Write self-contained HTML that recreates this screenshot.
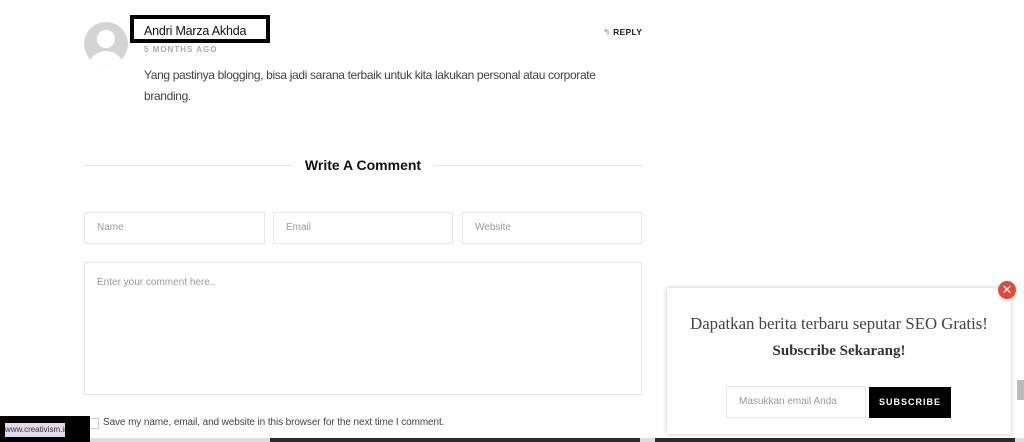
<!DOCTYPE html>
<html><head><style>
body{margin:0;width:1024px;height:442px;overflow:hidden;background:#fff;position:relative;font-family:"Liberation Sans",sans-serif;}
.a{position:absolute;}
.inp{position:absolute;border:1px solid #e6e6e6;box-sizing:border-box;color:#999;font-size:10px;padding-left:12px;}
</style></head><body>
<div class="a" style="left:84px;top:22px;width:44px;height:44px;border-radius:50%;background:#d4d4d4;overflow:hidden">
 <div class="a" style="left:13px;top:8px;width:18px;height:18px;border-radius:50%;background:#fff"></div>
 <div class="a" style="left:5px;top:29px;width:34px;height:30px;border-radius:50%;background:#fff"></div>
</div>
<div class="a" style="left:130px;top:15px;width:140px;height:28px;border:4px solid #000;box-sizing:border-box"></div>
<div class="a" style="left:144px;top:24px;font-size:12.5px;color:#111;letter-spacing:-0.2px">Andri Marza Akhda</div>
<div class="a" style="left:144px;top:45px;font-size:8px;color:#aaa;letter-spacing:1px;font-weight:bold">5 MONTHS AGO</div>
<div class="a" style="left:603px;top:27px;font-size:8.5px;color:#222;font-weight:bold;letter-spacing:.3px"><span style="color:#aaa">↰</span> REPLY</div>
<div class="a" style="left:144px;top:65px;font-size:12px;color:#444;line-height:21px;width:490px;letter-spacing:-0.35px">Yang pastinya blogging, bisa jadi sarana terbaik untuk kita lakukan personal atau corporate branding.</div>
<div class="a" style="left:84px;top:165px;width:208px;height:1px;background:#e5e5e5"></div>
<div class="a" style="left:434px;top:165px;width:208px;height:1px;background:#e5e5e5"></div>
<div class="a" style="left:292px;top:157px;width:142px;text-align:center;font-size:14px;font-weight:bold;color:#111">Write A Comment</div>
<div class="inp" style="left:84px;top:212px;width:181px;height:32px;line-height:30px">Name</div>
<div class="inp" style="left:273px;top:212px;width:180px;height:32px;line-height:30px">Email</div>
<div class="inp" style="left:462px;top:212px;width:180px;height:32px;line-height:30px">Website</div>
<div class="inp" style="left:84px;top:262px;width:558px;height:133px;padding-top:14px">Enter your comment here..</div>
<div class="a" style="left:88px;top:418px;width:9px;height:9px;border:1px solid #ccc"></div>
<div class="a" style="left:103px;top:417px;font-size:10px;color:#444;letter-spacing:-0.1px">Save my name, email, and website in this browser for the next time I comment.</div>
<div class="a" style="left:0;top:416px;width:90px;height:26px;background:#000"></div>
<div class="a" style="left:5px;top:423px;width:60px;height:14px;background:#e6d9ef;font-size:8px;line-height:14px;color:#333;white-space:nowrap;overflow:hidden">www.creativism.id</div>
<div class="a" style="left:90px;top:438px;width:934px;height:4px;background:#ddd"></div>
<div class="a" style="left:270px;top:438px;width:370px;height:4px;background:#2a2a2a"></div>
<div class="a" style="left:655px;top:438px;width:360px;height:4px;background:#2a2a2a"></div>
<div class="a" style="left:667px;top:288px;width:344px;height:146px;background:#fff;box-shadow:0 0 4px rgba(0,0,0,.25)"></div>
<div class="a" style="left:667px;top:314px;width:344px;text-align:center;font-family:'Liberation Serif',serif;font-size:16.8px;color:#444;white-space:nowrap">Dapatkan berita terbaru seputar SEO Gratis!</div>
<div class="a" style="left:667px;top:343px;width:344px;text-align:center;font-family:'Liberation Serif',serif;font-size:15px;font-weight:bold;color:#333">Subscribe Sekarang!</div>
<div class="inp" style="left:726px;top:386px;width:140px;height:32px;line-height:30px;color:#999">Masukkan email Anda</div>
<div class="a" style="left:869px;top:387px;width:82px;height:31px;background:#000;color:#fff;font-size:9px;font-weight:bold;letter-spacing:1px;text-align:center;line-height:31px">SUBSCRIBE</div>
<div class="a" style="left:998px;top:281px;width:18px;height:18px;border-radius:50%;background:#e8463c;color:#fff;text-align:center;line-height:18px;font-size:13px">✕</div>
<div class="a" style="left:1017px;top:380px;width:7px;height:20px;background:#bbb"></div>
</body></html>
